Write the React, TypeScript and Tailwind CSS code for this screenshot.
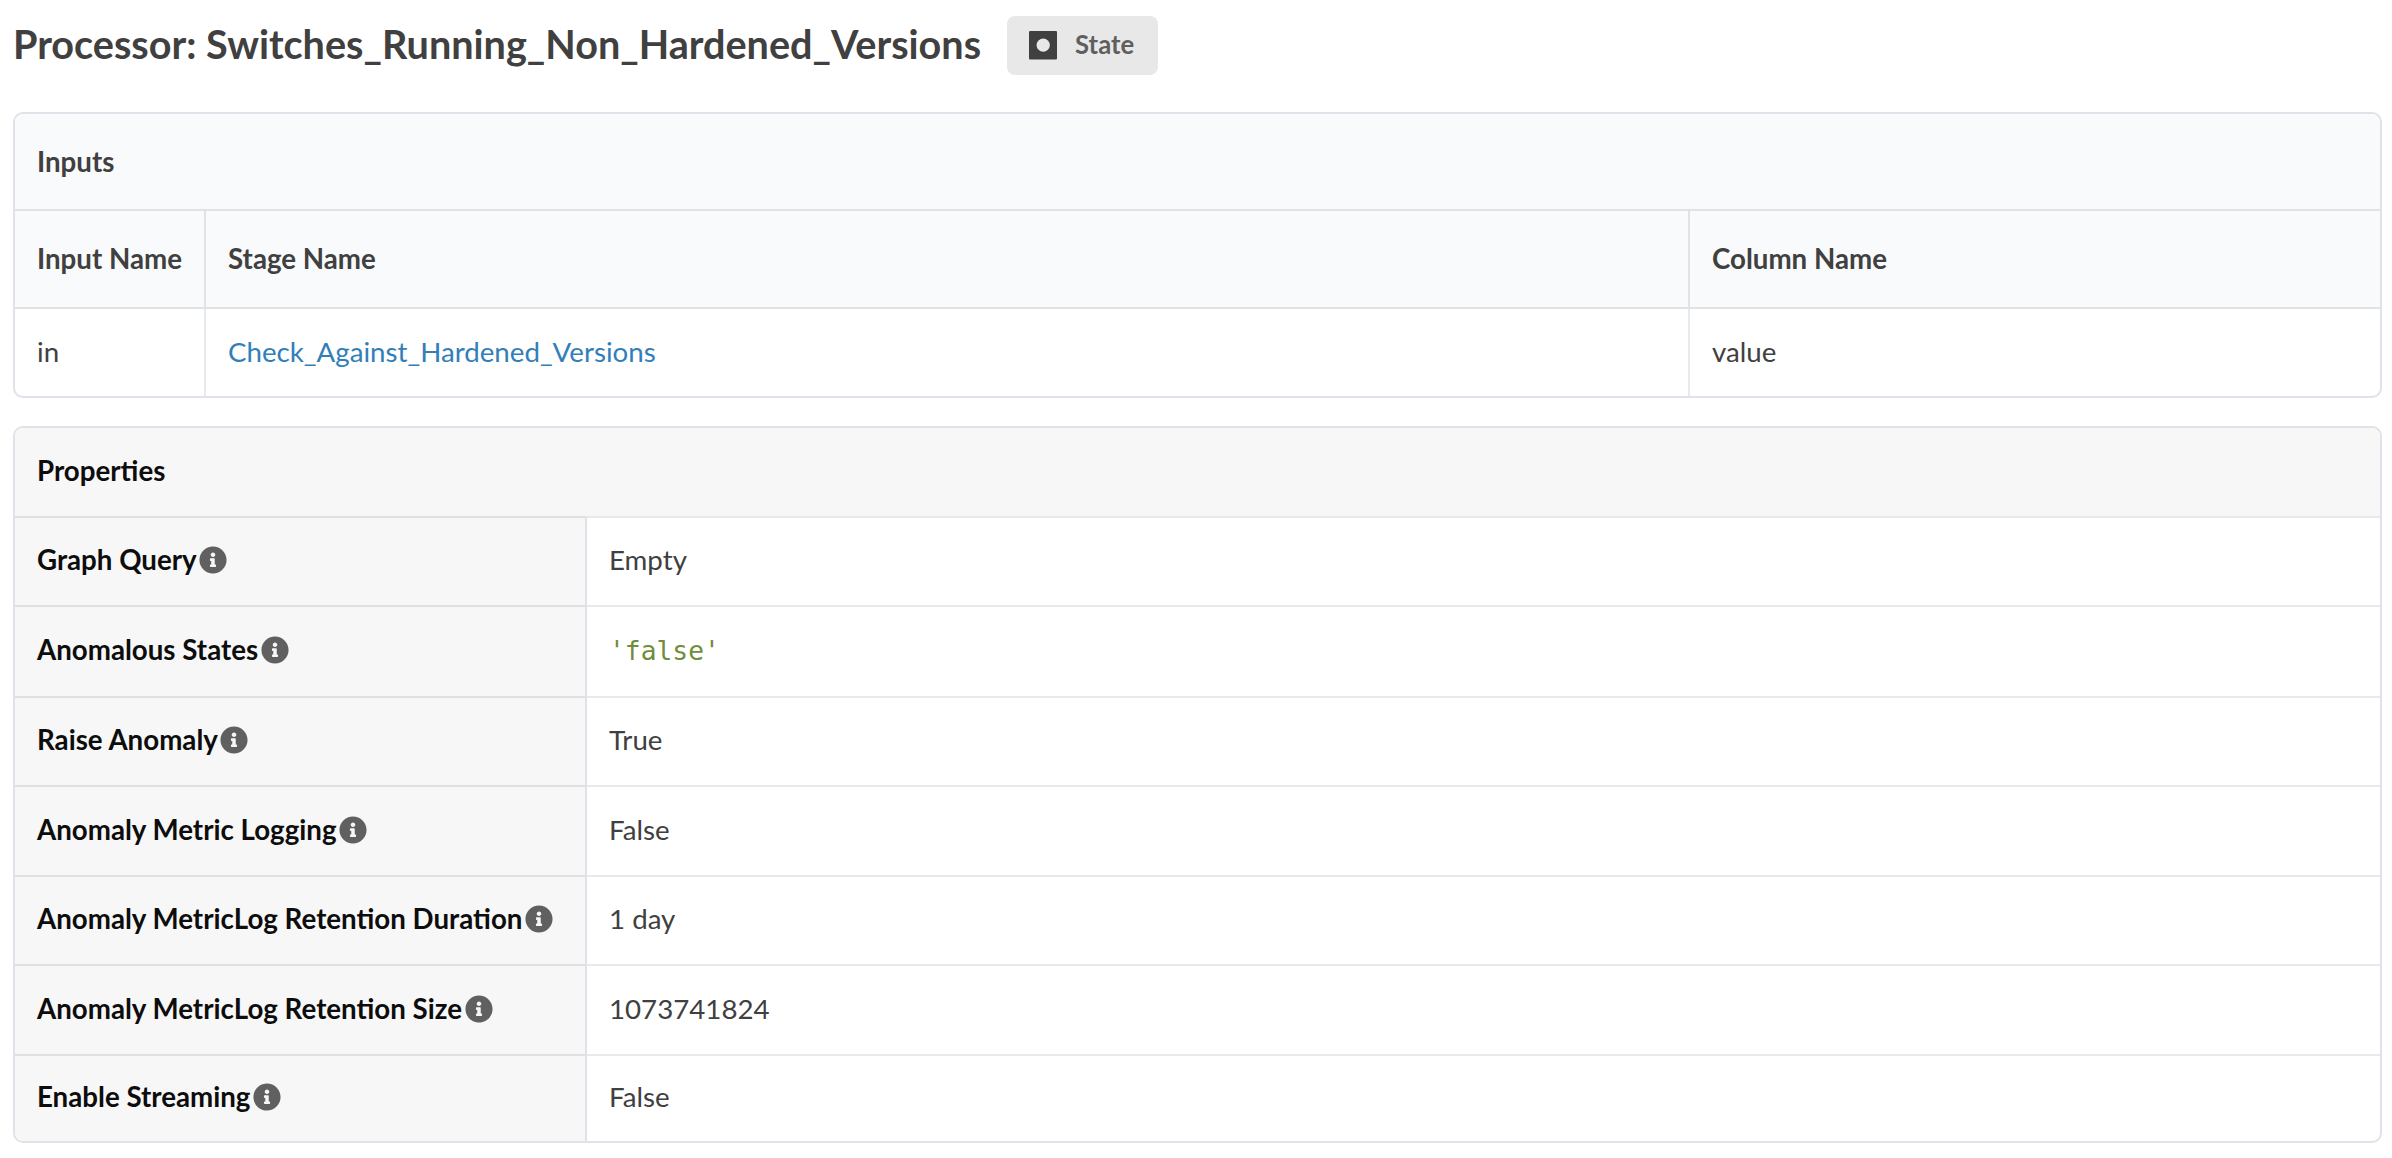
import { FaInfoCircle } from 'react-icons/fa';

const properties = [
  { label: 'Graph Query', value: 'Empty', height: 'h-[89px]' },
  { label: 'Anomalous States', value: "'false'", height: 'h-[91px]', code: true },
  { label: 'Raise Anomaly', value: 'True', height: 'h-[89px]' },
  { label: 'Anomaly Metric Logging', value: 'False', height: 'h-[90px]' },
  { label: 'Anomaly MetricLog Retention Duration', value: '1 day', height: 'h-[89px]' },
  { label: 'Anomaly MetricLog Retention Size', value: '1073741824', height: 'h-[90px]' },
  { label: 'Enable Streaming', value: 'False', height: 'h-[87px]' },
];

function StateBadge() {
  return (
    <div className="flex h-[59px] w-[151px] items-center rounded-lg bg-[#e8e8e8] pl-[22px]">
      <svg width="28" height="29" viewBox="0 0 28 29" className="shrink-0">
        <rect width="28" height="28.5" rx="1" fill="#404040" />
        <circle cx="14.2" cy="14.2" r="6.6" fill="#e8e8e8" />
      </svg>
      <span className="ml-[18px] pb-[3px] text-[25.7px] leading-[30px] font-bold text-[#5f5f5f]">State</span>
    </div>
  );
}

function InputsTable() {
  const cols = 'grid grid-cols-[191px_1484px_1fr]';
  return (
    <section className="mt-[37px] overflow-hidden rounded-[10px] border-2 border-[#dfe2e8]">
      <div className="flex h-[97px] items-center border-b-2 border-[#e0e3e6] bg-[#f9fafc] pl-[22px] font-bold">
        Inputs
      </div>
      <div className={`${cols} h-[98px] border-b-2 border-[#e0e3e6] bg-[#f9fafc] font-bold`}>
        <div className="flex items-center border-r-2 border-[#e0e3e6] pl-[22px]">Input Name</div>
        <div className="flex items-center border-r-2 border-[#e0e3e6] pl-[22px]">Stage Name</div>
        <div className="flex items-center pl-[22px]">Column Name</div>
      </div>
      <div className={`${cols} h-[87px]`}>
        <div className="flex items-center border-r-2 border-[#e8e9ea] pb-px pl-[22px]">in</div>
        <div className="flex items-center border-r-2 border-[#e8e9ea] pb-px pl-[22px]">
          <a className="text-[#327eb9]">Check_Against_Hardened_Versions</a>
        </div>
        <div className="flex items-center pb-px pl-[22px]">value</div>
      </div>
    </section>
  );
}

function PropertiesTable() {
  return (
    <section className="mt-7 overflow-hidden rounded-[10px] border-2 border-[#dfe2e8]">
      <div className="flex h-[88px] items-center bg-[#f7f7f7] pb-[2px] pl-[22px] font-bold text-[#0d0d0d]">Properties</div>
      {properties.map((p) => (
        <div key={p.label} className={`${p.height} grid grid-cols-[572px_1fr]`}>
          <div className="flex items-center border-t-2 border-r-2 border-t-[#dfe0e1] border-r-[#dfe2e8] bg-[#f7f7f7] pb-[3px] pl-[22px] font-bold text-[#0d0d0d]">
            {p.label}
            <FaInfoCircle className="ml-[2.5px] size-7 text-[#606060]" />
          </div>
          <div className="flex items-center border-t-2 border-[#e8e9ea] pb-[3px] pl-[22px]">
            {p.code ? (
              <code className="pt-[2px] font-['DejaVu_Sans_Mono',monospace] text-[26.3px] text-[#718c3a]">{p.value}</code>
            ) : (
              p.value
            )}
          </div>
        </div>
      ))}
    </section>
  );
}

export default function App() {
  return (
    <main className="min-h-[1158px] bg-white pt-4 pr-[10px] pl-[13px] font-['Lato',sans-serif] text-[27.7px] leading-8 text-[#404040]">
      <header className="flex h-[59px] items-center">
        <h1 className="mr-[26px] pb-[3px] text-[39.6px] leading-[50px] font-bold whitespace-nowrap">
          Processor: Switches_Running_Non_Hardened_Versions
        </h1>
        <StateBadge />
      </header>
      <InputsTable />
      <PropertiesTable />
    </main>
  );
}
